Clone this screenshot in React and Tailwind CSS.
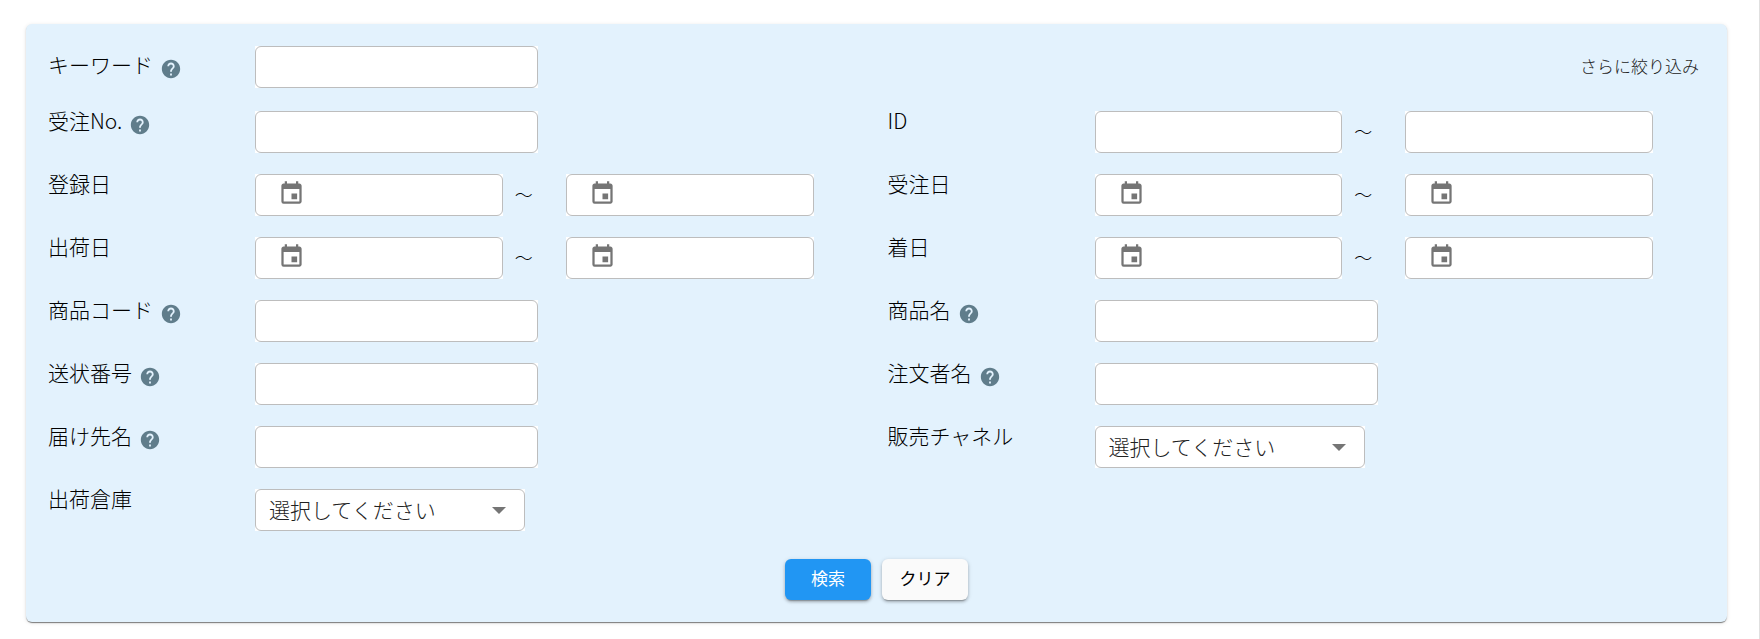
import React from 'react';
import { MdEvent, MdHelp } from 'react-icons/md';

const inputClass = 'block w-full h-[42px] rounded-md border border-[#bdbdbd] bg-white text-[21px] outline-none';

const HelpButton = ({ label }) => (
  <button type="button" aria-label={`${label}のヘルプ`} className="mt-[3px] shrink-0">
    <MdHelp className="w-[22px] h-[22px] text-[#607d8b]" />
  </button>
);

const Field = ({ id, label, help, center, children }) => (
  <div className={`flex ${center ? 'items-center' : 'items-start'}`}>
    <div className="w-[207px] shrink-0 flex items-start gap-[7px]">
      <label htmlFor={id} className="text-[21px] leading-[18px] text-black">
        {label}
      </label>
      {help && <HelpButton label={label} />}
    </div>
    {children}
  </div>
);

const TextField = ({ id, label, help, center }) => (
  <Field id={id} label={label} help={help} center={center}>
    <div className="w-[283px] bg-white">
      <input id={id} type="text" className={`${inputClass} px-3.5`} />
    </div>
  </Field>
);

const RangeInput = ({ id, date, ariaLabel }) => (
  <div className="flex-1 min-w-0 relative bg-white">
    <input
      id={id}
      type="text"
      aria-label={ariaLabel}
      className={`${inputClass} ${date ? 'pl-14 pr-3.5' : 'px-3.5'}`}
    />
    {date && (
      <MdEvent className="absolute left-[23px] top-1.5 w-[27px] h-[27px] text-[#757575] pointer-events-none" />
    )}
  </div>
);

const RangeField = ({ id, label, date }) => (
  <Field id={id} label={label}>
    <div className="flex-1 flex items-center pr-[74px]">
      <RangeInput id={id} date={date} />
      <span className="w-[63px] shrink-0 pl-3 pb-0.5 text-lg leading-6 text-black">～</span>
      <RangeInput id={`${id}-to`} date={date} ariaLabel={`${label}（終了）`} />
    </div>
  </Field>
);

const SelectField = ({ id, label }) => (
  <Field id={id} label={label}>
    <div className="relative w-[270px] bg-white">
      <select
        id={id}
        className="block w-full h-[42px] appearance-none rounded-md border border-[#bdbdbd] bg-white pl-[13px] pr-10 text-[21px] text-[#212121] outline-none"
      >
        <option>選択してください</option>
      </select>
      <svg
        className="absolute right-[19px] top-[18px] w-3.5 h-[7px] text-[#757575] pointer-events-none"
        viewBox="0 0 14 7"
        fill="currentColor"
      >
        <path d="M0 0h14L7 7z" />
      </svg>
    </div>
  </Field>
);

const App = () => {
  return (
    <main className="min-h-screen border-r border-[#e0e0e0] bg-white pt-6 pb-4 pl-[26px] pr-8 font-['Noto_Sans_CJK_JP',sans-serif] font-light">
      <form
        onSubmit={(e) => e.preventDefault()}
        className="rounded-md bg-[#e3f2fd] py-[22px] shadow-[0_2px_1px_-1px_rgba(0,0,0,0.3),0_1px_1px_0_rgba(0,0,0,0.24),0_1px_4px_0_rgba(0,0,0,0.12)]"
      >
        <div className="flex items-center justify-between pl-[22px] pr-7">
          <TextField id="keyword" label="キーワード" help center />
          <button type="button" className="pb-0.5 text-[17px] leading-6 text-[#212121]">
            さらに絞り込み
          </button>
        </div>

        <div className="mt-[23px] grid grid-cols-2 gap-y-[21px] pl-[22px]">
          <TextField id="order-no" label="受注No." help />
          <RangeField id="order-id" label="ID" />
          <RangeField id="registered" label="登録日" date />
          <RangeField id="ordered" label="受注日" date />
          <RangeField id="shipped" label="出荷日" date />
          <RangeField id="arrival" label="着日" date />
          <TextField id="item-code" label="商品コード" help />
          <TextField id="item-name" label="商品名" help />
          <TextField id="tracking" label="送状番号" help />
          <TextField id="orderer" label="注文者名" help />
          <TextField id="recipient" label="届け先名" help />
          <SelectField id="channel" label="販売チャネル" />
          <SelectField id="warehouse" label="出荷倉庫" />
        </div>

        <div className="mt-7 flex justify-center gap-[11px]">
          <button
            type="submit"
            className="w-[86px] h-[41px] pb-1 rounded-md bg-[#2196f3] text-[17px] font-normal text-white shadow-[0_3px_1px_-2px_rgba(0,0,0,0.2),0_2px_3px_0_rgba(0,0,0,0.2),0_1px_5px_0_rgba(0,0,0,0.14)]"
          >
            検索
          </button>
          <button
            type="reset"
            className="w-[86px] h-[41px] pb-1 rounded-md bg-[#fafafa] text-[17px] font-normal text-black shadow-[0_3px_1px_-2px_rgba(0,0,0,0.2),0_2px_3px_0_rgba(0,0,0,0.2),0_1px_5px_0_rgba(0,0,0,0.14)]"
          >
            クリア
          </button>
        </div>
      </form>
    </main>
  );
};

export default App;
